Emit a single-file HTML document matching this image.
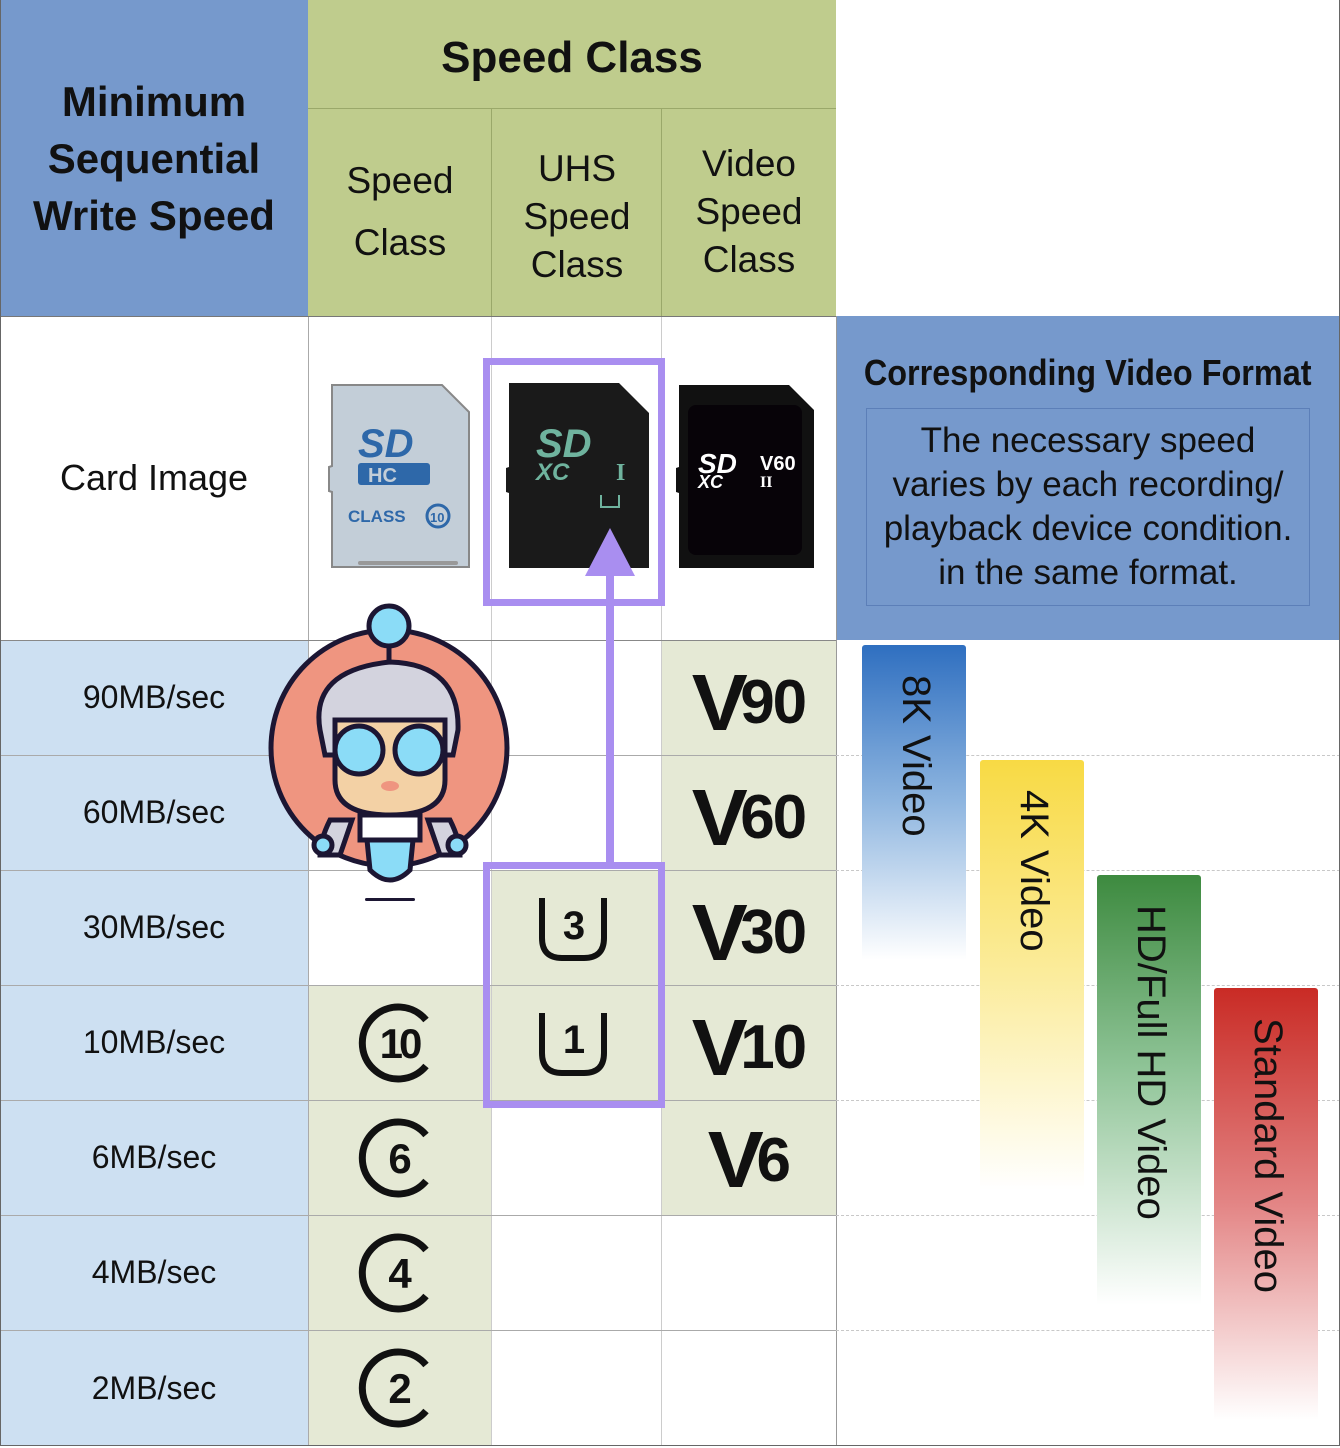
<!DOCTYPE html>
<html><head><meta charset="utf-8"><style>
*{margin:0;padding:0;box-sizing:border-box}
body{width:1340px;height:1446px;position:relative;background:#fff;font-family:"Liberation Sans",sans-serif;color:#111;overflow:hidden}
.a{position:absolute}
.c{display:flex;align-items:center;justify-content:center;text-align:center}
.hb{background:#7699cc}
.hg{background:#bfcc8d}
.lb{background:#cde0f2}
.lg{background:#e5e9d5}
.vl{position:absolute;width:1px;background:#aaa}
.hl{position:absolute;height:1px;background:#aaa}
.dl{position:absolute;left:836px;width:504px;border-top:1px dashed #c8c8c8}
.lbl{font-size:32px}
.bar{position:absolute;width:104px;border-radius:3px 3px 0 0}
.bt{position:absolute;left:50%;top:30px;transform-origin:0 0;white-space:nowrap;font-size:40px;transform:translateX(24px) rotate(90deg);}
.v{font-family:"Liberation Sans",sans-serif;font-weight:bold;font-size:62px;letter-spacing:-2px}
.v b{font-size:80px;font-weight:900;transform:scaleX(1.05);display:inline-block;margin-right:-4px}
</style></head><body>

<div class="a c hb" style="left:0;top:0;width:308px;height:316px;font-weight:bold;font-size:42px;line-height:57px">Minimum<br>Sequential<br>Write Speed</div>
<div class="a c hg" style="left:308px;top:0;width:528px;height:108px;font-weight:bold;font-size:44px;padding-top:8px">Speed Class</div>
<div class="a c hg" style="left:308px;top:108px;width:184px;height:208px;font-size:37px;line-height:62px">Speed<br>Class</div>
<div class="a c hg" style="left:492px;top:108px;width:170px;height:208px;font-size:37px;line-height:48px;padding-top:10px">UHS<br>Speed<br>Class</div>
<div class="a c hg" style="left:662px;top:108px;width:174px;height:208px;font-size:37px;line-height:48px">Video<br>Speed<br>Class</div>
<div class="hl" style="left:308px;top:108px;width:528px;background:#9aa86a"></div>
<div class="vl" style="left:491px;top:108px;height:208px;background:#9aa86a"></div>
<div class="vl" style="left:661px;top:108px;height:208px;background:#9aa86a"></div>

<div class="a c" style="left:0;top:316px;width:308px;height:324px;font-size:36px">Card Image</div>
<div class="a c hb" style="left:836px;top:316px;width:504px;height:324px;flex-direction:column;justify-content:flex-start">
<div style="font-weight:bold;font-size:36px;margin-top:36px;transform:scaleX(.9)">Corresponding Video Format</div>
<div style="position:absolute;left:30px;top:92px;width:444px;height:198px;border:1px solid #5c7fb8;font-size:35px;line-height:44px;padding-top:10px">The necessary speed<br>varies by each recording/<br>playback device condition.<br>in the same format.</div>
</div>

<div class="a lb" style="left:0;top:640px;width:308px;height:806px"></div>
<div class="a c lbl" style="left:0;top:640px;width:308px;height:115px">90MB/sec</div>
<div class="a c lbl" style="left:0;top:755px;width:308px;height:115px">60MB/sec</div>
<div class="a c lbl" style="left:0;top:870px;width:308px;height:115px">30MB/sec</div>
<div class="a c lbl" style="left:0;top:985px;width:308px;height:115px">10MB/sec</div>
<div class="a c lbl" style="left:0;top:1100px;width:308px;height:115px">6MB/sec</div>
<div class="a c lbl" style="left:0;top:1215px;width:308px;height:115px">4MB/sec</div>
<div class="a c lbl" style="left:0;top:1330px;width:308px;height:116px">2MB/sec</div>

<div class="a lg" style="left:308px;top:985px;width:184px;height:461px"></div>
<div class="a lg" style="left:492px;top:870px;width:170px;height:230px"></div>
<div class="a lg" style="left:662px;top:640px;width:174px;height:575px"></div>

<div class="vl" style="left:308px;top:316px;height:1130px"></div>
<div class="vl" style="left:491px;top:316px;height:1130px;background:#ccc"></div>
<div class="vl" style="left:661px;top:316px;height:1130px;background:#ccc"></div>
<div class="vl" style="left:836px;top:316px;height:1130px;background:#999"></div>
<div class="hl" style="left:0;top:316px;width:836px;background:#777"></div>
<div class="hl" style="left:0;top:640px;width:836px;background:#888"></div>
<div class="hl" style="left:0;top:755px;width:836px"></div>
<div class="hl" style="left:0;top:870px;width:836px"></div>
<div class="hl" style="left:0;top:985px;width:836px"></div>
<div class="hl" style="left:0;top:1100px;width:836px"></div>
<div class="hl" style="left:0;top:1215px;width:836px"></div>
<div class="hl" style="left:0;top:1330px;width:836px"></div>
<div class="dl" style="top:755px"></div><div class="dl" style="top:870px"></div><div class="dl" style="top:985px"></div><div class="dl" style="top:1100px"></div><div class="dl" style="top:1215px"></div><div class="dl" style="top:1330px"></div>
<div class="a" style="left:0;top:0;width:1340px;height:1446px;border:1px solid #666;border-top:none"></div>

<div class="bar" style="left:862px;top:645px;height:315px;background:linear-gradient(#2f6fc0,#8fb6e0 50%,#fff)"><div class="bt">8K Video</div></div>
<div class="bar" style="left:980px;top:760px;height:430px;background:linear-gradient(#f8da44,#fbec9c 50%,#fff)"><div class="bt">4K Video</div></div>
<div class="bar" style="left:1097px;top:875px;height:430px;background:linear-gradient(#3d8a3f,#8fc497 45%,#fff)"><div class="bt">HD/Full HD Video</div></div>
<div class="bar" style="left:1214px;top:988px;height:432px;background:linear-gradient(#c92b25,#e38585 50%,#fff)"><div class="bt">Standard Video</div></div>

<svg class="a" style="left:320px;top:375px" width="510" height="210" viewBox="0 0 510 210">
<path d="M12 10h110l27 27v155h-137v-75l-3-1v-24l3-1z" fill="#c3ced8" stroke="#888" stroke-width="2"/>
<text x="38" y="82" font-size="40" font-weight="bold" font-style="italic" fill="#2e68a9" font-family="Liberation Sans">SD</text>
<rect x="38" y="88" width="72" height="22" rx="3" fill="#2e68a9"/><text x="48" y="107" font-size="20" font-weight="bold" fill="#c3ced8">HC</text>
<text x="28" y="147" font-size="17" font-weight="bold" fill="#2e68a9">CLASS</text><circle cx="118" cy="141" r="11" fill="none" stroke="#2e68a9" stroke-width="3"/><text x="110" y="147" font-size="13" font-weight="bold" fill="#2e68a9">10</text>
<rect x="38" y="186" width="100" height="4" rx="2" fill="#999"/>
<path d="M189 8h110l30 30v155h-140v-75l-3-1v-24l3-1z" fill="#1a1a1a"/>
<text x="216" y="82" font-size="40" font-weight="bold" font-style="italic" fill="#6fb39e">SD</text>
<text x="216" y="105" font-size="24" font-weight="bold" font-style="italic" fill="#6fb39e">XC</text>
<text x="296" y="105" font-size="24" font-weight="bold" fill="#6fb39e" font-family="Liberation Serif">I</text>
<path d="M281 120v12h18v-12" fill="none" stroke="#6fb39e" stroke-width="2"/>
<path d="M359 10h110l25 25v158h-135v-75l-3-1v-24l3-1z" fill="#111"/>
<rect x="368" y="30" width="114" height="150" rx="8" fill="#070308"/>
<text x="378" y="98" font-size="28" font-weight="bold" font-style="italic" fill="#fff">SD</text>
<text x="378" y="113" font-size="18" font-weight="bold" font-style="italic" fill="#fff">XC</text>
<text x="440" y="95" font-size="20" font-weight="bold" fill="#fff">V60</text>
<text x="440" y="112" font-size="16" font-weight="bold" fill="#fff" font-family="Liberation Serif">II</text>
</svg>

<div class="a" style="left:483px;top:358px;width:182px;height:248px;border:7px solid #a98ef0"></div>
<div class="a" style="left:483px;top:862px;width:182px;height:246px;border:7px solid #a98ef0"></div>
<div class="a" style="left:606px;top:570px;width:8px;height:292px;background:#a98ef0"></div>
<svg class="a" style="left:585px;top:528px" width="50" height="48"><path d="M25 0L50 48H0z" fill="#a98ef0"/></svg>

<svg class="a" style="left:350px;top:998px" width="100" height="450" viewBox="0 0 100 450">
<g fill="none" stroke="#111" stroke-width="7">
<path d="M76 22A36 36 0 1 0 76 68"/><path d="M76 137A36 36 0 1 0 76 183"/><path d="M76 252A36 36 0 1 0 76 298"/><path d="M76 367A36 36 0 1 0 76 413"/>
</g>
<g font-weight="bold" font-size="42" fill="#111" text-anchor="middle" font-family="Liberation Sans">
<text x="49" y="60" letter-spacing="-4">10</text><text x="50" y="175">6</text><text x="50" y="290">4</text><text x="50" y="405">2</text>
</g></svg>

<svg class="a" style="left:530px;top:895px" width="90" height="190">
<g fill="none" stroke="#111" stroke-width="6"><path d="M12 3v40q0 20 20 20h22q20 0 20-20v-40"/><path d="M12 118v40q0 20 20 20h22q20 0 20-20v-40"/></g>
<g font-weight="bold" font-size="40" fill="#111" text-anchor="middle"><text x="44" y="44">3</text><text x="44" y="158">1</text></g></svg>

<div class="a c v" style="left:662px;top:640px;width:174px;height:125px"><b>V</b>90</div>
<div class="a c v" style="left:662px;top:755px;width:174px;height:125px"><b>V</b>60</div>
<div class="a c v" style="left:662px;top:870px;width:174px;height:125px"><b>V</b>30</div>
<div class="a c v" style="left:662px;top:985px;width:174px;height:125px"><b>V</b>10</div>
<div class="a c v" style="left:662px;top:1100px;width:174px;height:120px"><b>V</b>6</div>

<svg class="a" style="left:265px;top:600px" width="250" height="305" viewBox="0 0 250 305">
<g stroke="#1c1633" stroke-width="5">
<circle cx="124" cy="148" r="118" fill="#ef9580"/>
<line x1="124" y1="40" x2="124" y2="60"/>
<circle cx="124" cy="26" r="20" fill="#8bdcf7"/>
<path d="M55 130q-10-60 70-68q70 2 68 68l-5 25h-128z" fill="#d3d3de"/>
<path d="M70 120h110v60q0 35-55 35q-55 0-55-35z" fill="#f3d1a5"/>
<circle cx="94" cy="150" r="24" fill="#8bdcf7"/><circle cx="154" cy="150" r="24" fill="#8bdcf7"/>
<path d="M95 215h60v25h-60z" fill="#fff"/>
<path d="M102 240h46l-3 30q-20 20-40 0z" fill="#8bdcf7"/>
<path d="M65 220q-10 20-10 35l20 0 12-35z" fill="#d3d3de"/><path d="M185 220q10 20 10 35l-20 0-12-35z" fill="#d3d3de"/>
<circle cx="58" cy="245" r="9" fill="#8bdcf7"/><circle cx="192" cy="245" r="9" fill="#8bdcf7"/>
</g>
<ellipse cx="125" cy="186" rx="9" ry="5" fill="#ef9580"/>
<rect x="100" y="298" width="50" height="3" rx="1.5" fill="#1c1633"/>
</svg>
</body></html>
